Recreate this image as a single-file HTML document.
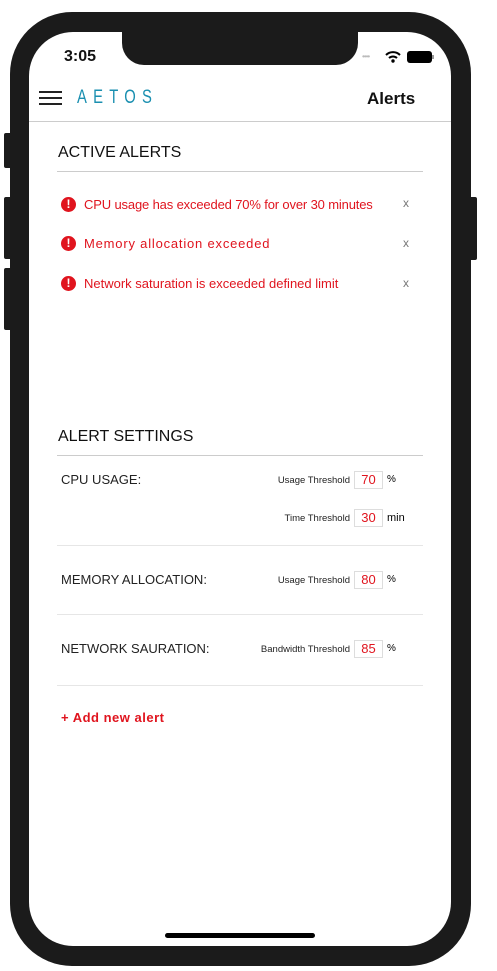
<!DOCTYPE html>
<html><head><style>
*{margin:0;padding:0;box-sizing:border-box}
body{width:497px;height:971px;background:#fff;position:relative;overflow:hidden;font-family:"Liberation Sans",sans-serif}
.a{position:absolute}
.frame{left:10px;top:12px;width:461px;height:954px;background:#1b1b1b;border-radius:62px}
.screen{left:29px;top:32px;width:422px;height:914px;background:#fff;border-radius:44px;overflow:hidden}
.btn{background:#1b1b1b;border-radius:2px}
.t{white-space:nowrap}
.red{color:#e0141e}
.line{height:1px;background:#ccc}
.sep{height:1px;background:#e6e6e6;left:57px;width:366px}
.box{width:29px;height:18px;border:1px solid #ddd;color:#e0141e;font-size:13px;text-align:center;line-height:16px}
.lab{font-size:9.5px;color:#222;text-align:right}
.ic{width:15px;height:15px;border-radius:50%;background:#e0141e;color:#fff;font-weight:bold;font-size:12px;text-align:center;line-height:15px}
</style></head><body>
<div class="a btn" style="left:4px;top:133px;width:8px;height:35px"></div>
<div class="a btn" style="left:4px;top:197px;width:8px;height:62px"></div>
<div class="a btn" style="left:4px;top:268px;width:8px;height:62px"></div>
<div class="a btn" style="left:469px;top:197px;width:8px;height:63px"></div>
<div class="a frame"></div>
<div class="a screen"></div>
<div class="a" style="left:122px;top:28px;width:236px;height:37px;background:#1b1b1b;border-radius:0 0 22px 22px"></div>
<div class="a t" style="left:64px;top:48px;font-size:16px;font-weight:bold;color:#111">3:05</div>
<div class="a t" style="left:362px;top:52px;font-size:8px;color:#bbb;letter-spacing:-1px">••••</div>
<svg class="a" style="left:385px;top:50px" width="16" height="13" viewBox="0 0 16 13"><path d="M1 5 A10 10 0 0 1 15 5" stroke="#000" stroke-width="2" fill="none"/><path d="M4 8 A6 6 0 0 1 12 8" stroke="#000" stroke-width="2" fill="none"/><circle cx="8" cy="11" r="1.7"/></svg>
<div class="a" style="left:407px;top:51px;width:25px;height:12px;background:#000;border-radius:3px"></div>
<div class="a" style="left:432px;top:55px;width:2px;height:4px;background:#999"></div>
<div class="a" style="left:39px;top:91px;width:23px;height:2px;background:#222"></div>
<div class="a" style="left:39px;top:97px;width:23px;height:2px;background:#222"></div>
<div class="a" style="left:39px;top:103px;width:23px;height:2px;background:#222"></div>
<div class="a t" style="left:77px;top:87px;font-size:19px;color:#1a8fb0;letter-spacing:8px;transform:scaleX(0.78);transform-origin:left">AETOS</div>
<div class="a t" style="left:367px;top:89px;font-size:17px;font-weight:bold;color:#111">Alerts</div>
<div class="a line" style="left:29px;top:121px;width:422px"></div>
<div class="a t" style="left:58px;top:144px;font-size:16px;color:#111">ACTIVE ALERTS</div>
<div class="a line" style="left:57px;top:171px;width:366px"></div>
<div class="a ic" style="left:61px;top:197px">!</div>
<div class="a t red" style="left:84px;top:197px;font-size:13px;letter-spacing:-0.15px">CPU usage has exceeded 70% for over 30 minutes</div>
<div class="a t" style="left:403px;top:196px;font-size:12px;color:#777">x</div>
<div class="a ic" style="left:61px;top:236px">!</div>
<div class="a t red" style="left:84px;top:236px;font-size:13px;letter-spacing:0.8px">Memory allocation exceeded</div>
<div class="a t" style="left:403px;top:236px;font-size:12px;color:#777">x</div>
<div class="a ic" style="left:61px;top:276px">!</div>
<div class="a t red" style="left:84px;top:276px;font-size:13px">Network saturation is exceeded defined limit</div>
<div class="a t" style="left:403px;top:276px;font-size:12px;color:#777">x</div>
<div class="a t" style="left:58px;top:428px;font-size:16px;color:#111">ALERT SETTINGS</div>
<div class="a line" style="left:57px;top:455px;width:366px"></div>
<div class="a t" style="left:61px;top:472px;font-size:13px;color:#222">CPU USAGE:</div>
<div class="a t lab" style="left:250px;top:475px;width:100px">Usage Threshold</div>
<div class="a box" style="left:354px;top:471px">70</div>
<div class="a t" style="left:387px;top:474px;font-size:10px">%</div>
<div class="a t lab" style="left:250px;top:513px;width:100px">Time Threshold</div>
<div class="a box" style="left:354px;top:509px">30</div>
<div class="a t" style="left:387px;top:512px;font-size:11px">min</div>
<div class="a sep" style="top:545px"></div>
<div class="a t" style="left:61px;top:572px;font-size:13px;color:#222">MEMORY ALLOCATION:</div>
<div class="a t lab" style="left:250px;top:575px;width:100px">Usage Threshold</div>
<div class="a box" style="left:354px;top:571px">80</div>
<div class="a t" style="left:387px;top:574px;font-size:10px">%</div>
<div class="a sep" style="top:614px"></div>
<div class="a t" style="left:61px;top:641px;font-size:13px;color:#222">NETWORK SAURATION:</div>
<div class="a t lab" style="left:230px;top:644px;width:120px">Bandwidth Threshold</div>
<div class="a box" style="left:354px;top:640px">85</div>
<div class="a t" style="left:387px;top:643px;font-size:10px">%</div>
<div class="a sep" style="top:685px"></div>
<div class="a t red" style="left:61px;top:710px;font-size:13px;font-weight:bold;letter-spacing:0.5px">+ Add new alert</div>
<div class="a" style="left:165px;top:933px;width:150px;height:5px;background:#000;border-radius:3px"></div>
</body></html>
